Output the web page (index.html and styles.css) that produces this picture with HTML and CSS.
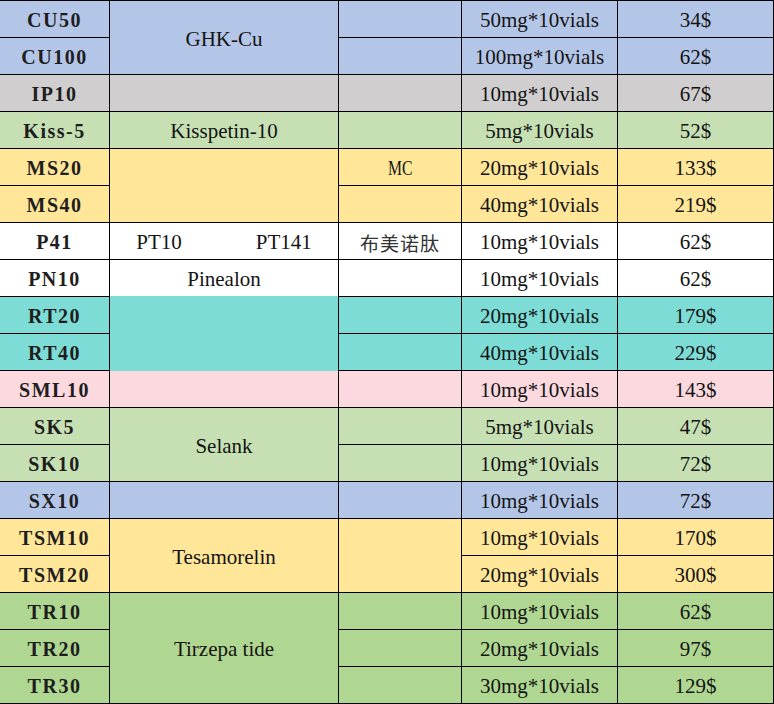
FILE: index.html
```html
<!DOCTYPE html>
<html>
<head>
<meta charset="utf-8">
<link rel="stylesheet" href="styles.css">
</head>
<body>
<div class="sheet">
  <div class="c code blue">CU50</div><div class="c blue s2">GHK-Cu</div><div class="c blue"></div><div class="c blue">50mg*10vials</div><div class="c blue">34$</div>
  <div class="c code blue">CU100</div><div class="c blue"></div><div class="c blue">100mg*10vials</div><div class="c blue">62$</div>
  <div class="c code grey">IP10</div><div class="c grey"></div><div class="c grey"></div><div class="c grey">10mg*10vials</div><div class="c grey">67$</div>
  <div class="c code lgreen">Kiss-5</div><div class="c lgreen">Kisspetin-10</div><div class="c lgreen"></div><div class="c lgreen">5mg*10vials</div><div class="c lgreen">52$</div>
  <div class="c code yellow">MS20</div><div class="c yellow s2"></div><div class="c yellow"><span class="mc">MC</span></div><div class="c yellow">20mg*10vials</div><div class="c yellow">133$</div>
  <div class="c code yellow">MS40</div><div class="c yellow"></div><div class="c yellow">40mg*10vials</div><div class="c yellow">219$</div>
  <div class="c code white">P41</div><div class="c white pair"><span>PT10</span><span>PT141</span></div><div class="c white cjk">布美诺肽</div><div class="c white">10mg*10vials</div><div class="c white">62$</div>
  <div class="c code white">PN10</div><div class="c white">Pinealon</div><div class="c white"></div><div class="c white">10mg*10vials</div><div class="c white">62$</div>
  <div class="c code teal">RT20</div><div class="c teal s2 open"></div><div class="c teal"></div><div class="c teal">20mg*10vials</div><div class="c teal">179$</div>
  <div class="c code teal">RT40</div><div class="c teal"></div><div class="c teal">40mg*10vials</div><div class="c teal">229$</div>
  <div class="c code pink">SML10</div><div class="c pink"></div><div class="c pink"></div><div class="c pink">10mg*10vials</div><div class="c pink">143$</div>
  <div class="c code lgreen">SK5</div><div class="c lgreen s2">Selank</div><div class="c lgreen"></div><div class="c lgreen">5mg*10vials</div><div class="c lgreen">47$</div>
  <div class="c code lgreen">SK10</div><div class="c lgreen"></div><div class="c lgreen">10mg*10vials</div><div class="c lgreen">72$</div>
  <div class="c code blue">SX10</div><div class="c blue"></div><div class="c blue"></div><div class="c blue">10mg*10vials</div><div class="c blue">72$</div>
  <div class="c code yellow">TSM10</div><div class="c yellow s2">Tesamorelin</div><div class="c yellow s2"></div><div class="c yellow">10mg*10vials</div><div class="c yellow">170$</div>
  <div class="c code yellow">TSM20</div><div class="c yellow">20mg*10vials</div><div class="c yellow">300$</div>
  <div class="c code green">TR10</div><div class="c green s3">Tirzepa tide</div><div class="c green"></div><div class="c green">10mg*10vials</div><div class="c green">62$</div>
  <div class="c code green">TR20</div><div class="c green"></div><div class="c green">20mg*10vials</div><div class="c green">97$</div>
  <div class="c code green">TR30</div><div class="c green"></div><div class="c green">30mg*10vials</div><div class="c green">129$</div>
</div>
</body>
</html>
```
FILE: styles.css
```css
html, body {
  margin: 0;
  padding: 0;
  background: #ffffff;
}
.sheet {
  display: grid;
  grid-template-columns: 109px 228px 122px 155px 155px;
  grid-auto-rows: 36px;
  gap: 1px;
  padding: 1px 1px 1px 0;
  background: #000;
  width: 774px;
  box-sizing: border-box;
}
.c {
  display: flex;
  align-items: center;
  justify-content: center;
  padding-top: 3px;
  box-sizing: border-box;
  font-family: "Liberation Serif", "Times New Roman", serif;
  font-size: 21px;
  color: #141414;
  white-space: nowrap;
}
.code {
  font-family: "Liberation Serif", "Times New Roman", serif;
  font-weight: bold;
  font-size: 20px;
  letter-spacing: 1.5px;
  color: #1e1e1e;
}
.mc {
  display: inline-block;
  font-size: 21px;
  transform: scaleX(0.75);
}
.cjk {
  font-family: "Noto Sans CJK SC", serif;
  font-size: 19px;
  color: #333;
  letter-spacing: 1px;
}
.pair {
  gap: 74px;
}
.s2 { grid-row: span 2; }
.s3 { grid-row: span 3; }
.open { margin: -1px 0; }
.blue { background: #b4c6e7; }
.grey { background: #d0cece; }
.lgreen { background: #c6e0b4; }
.yellow { background: #ffe699; }
.white { background: #ffffff; }
.teal { background: #7edcd6; }
.pink { background: #fbd9df; }
.green { background: #afd791; }
```
